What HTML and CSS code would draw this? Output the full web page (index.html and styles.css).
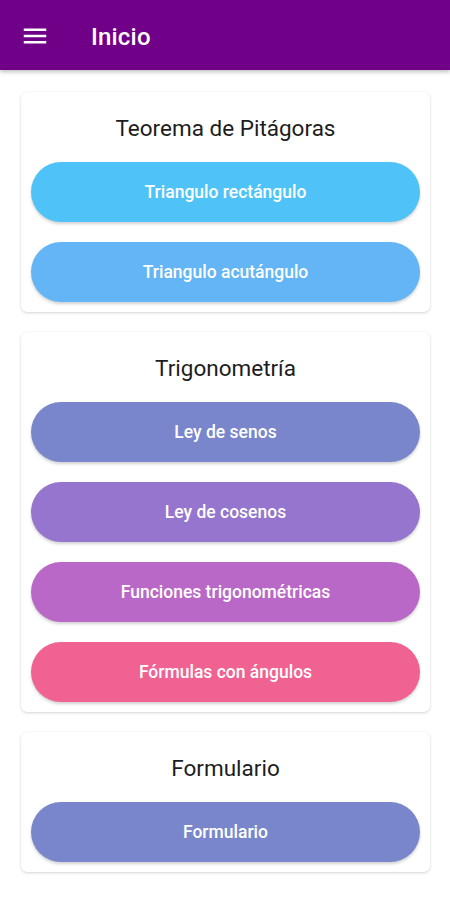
FILE: index.html
```html
<!DOCTYPE html>
<html lang="es">
<head>
<meta charset="utf-8">
<title>Inicio</title>
<link rel="stylesheet" href="styles.css">
</head>
<body>
<header class="appbar">
  <svg class="menu-icon" width="24" height="24" viewBox="0 0 24 24" aria-hidden="true">
    <path d="M3 18h18v-2H3v2zm0-5h18v-2H3v2zm0-7v2h18V6H3z" fill="#fff"/>
  </svg>
  <h1 class="appbar-title">Inicio</h1>
</header>
<main class="content">
  <section class="card">
    <h2 class="card-title">Teorema de Pitágoras</h2>
    <button class="btn btn-lightblue">Triangulo rectángulo</button>
    <button class="btn btn-blue">Triangulo acutángulo</button>
  </section>
  <section class="card">
    <h2 class="card-title">Trigonometría</h2>
    <button class="btn btn-indigo">Ley de senos</button>
    <button class="btn btn-deeppurple">Ley de cosenos</button>
    <button class="btn btn-purple">Funciones trigonométricas</button>
    <button class="btn btn-pink">Fórmulas con ángulos</button>
  </section>
  <section class="card">
    <h2 class="card-title">Formulario</h2>
    <button class="btn btn-indigo">Formulario</button>
  </section>
</main>
</body>
</html>
```
FILE: styles.css
```css
* { box-sizing: border-box; }
html, body {
  margin: 0;
  padding: 0;
  background: #ffffff;
  font-family: Roboto, "Liberation Sans", sans-serif;
}
.appbar {
  height: 70px;
  background: #6f0087;
  display: flex;
  align-items: center;
  padding-left: 20px;
  box-shadow: 0 2px 4px rgba(0,0,0,0.25);
}
.menu-icon {
  width: 30px;
  height: 30px;
  margin-top: 1px;
}
.appbar-title {
  margin: 3px 0 0 41px;
  color: #ffffff;
  font-size: 24px;
  font-weight: 500;
  letter-spacing: 0.2px;
}
.content {
  padding: 22px 20px 20px 21px;
  display: flex;
  flex-direction: column;
  gap: 20px;
}
.card {
  background: #fff;
  border-radius: 6px;
  box-shadow: 0 1px 3px rgba(0,0,0,0.16), 0 0 1px rgba(0,0,0,0.08);
  padding: 10px 10px 10px;
  display: flex;
  flex-direction: column;
  gap: 20px;
}
.card-title {
  margin: 12px 0 0;
  line-height: 28px;
  font-size: 22.5px;
  font-weight: 400;
  color: #1d1d1d;
  text-align: center;
}
.btn {
  height: 60px;
  border: none;
  border-radius: 30px;
  color: #ffffff;
  font-family: Roboto, "Liberation Sans", sans-serif;
  font-size: 17.5px;
  font-weight: 500;
  box-shadow: 0 2px 3px rgba(0,0,0,0.18);
  cursor: pointer;
}
.btn-lightblue { background: #4fc3f7; }
.btn-blue { background: #64b5f6; }
.btn-indigo { background: #7986cb; }
.btn-deeppurple { background: #9575cd; }
.btn-purple { background: #ba68c8; }
.btn-pink { background: #f06292; }
```
